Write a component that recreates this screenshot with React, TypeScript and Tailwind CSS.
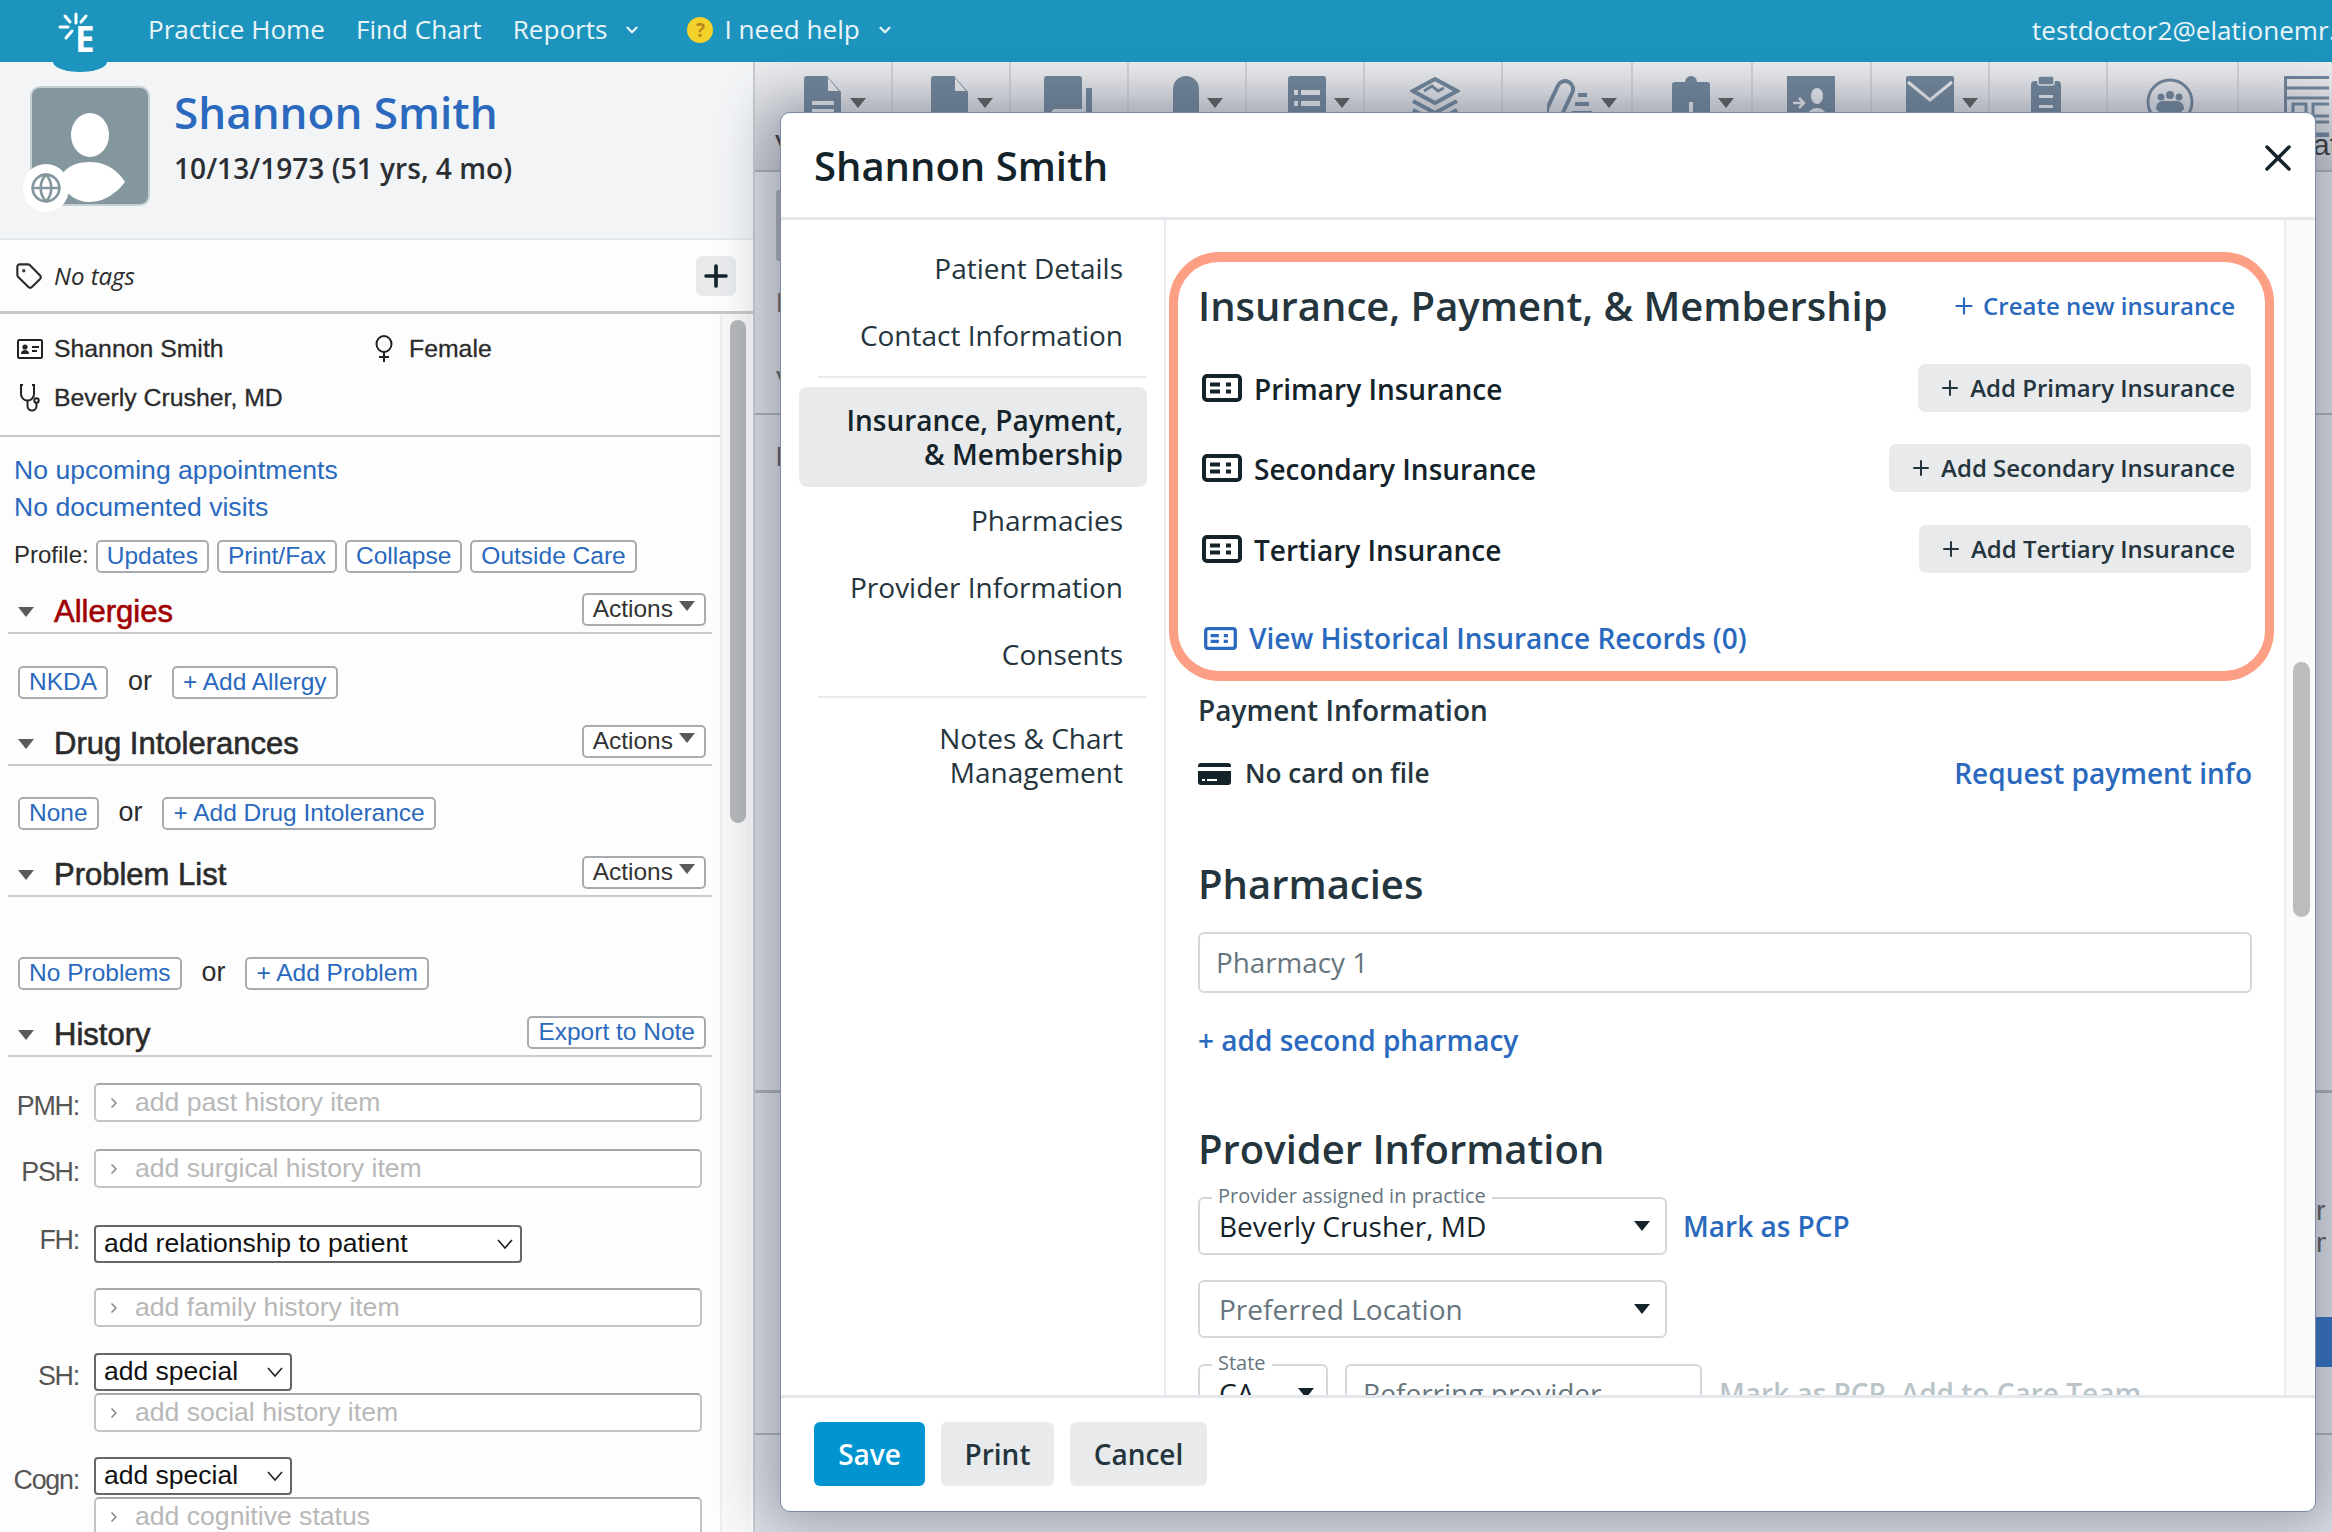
import { ChevronDown, ChevronRight, Globe, Plus, Tag, X } from "lucide-react"
import type { ReactNode } from "react"

const toolbarCells = [
  { w: "w-[138px]", icon: "doc-lines", pl: "pl-[49px]", arrow: true, label: "V", labelClass: "-ml-[29px]" },
  { w: "w-[118px]", icon: "doc", pl: "pl-[38px]", arrow: true },
  { w: "w-[118px]", icon: "chat", pl: "pl-[33px]", arrow: false },
  { w: "w-[118px]", icon: "pill", pl: "pl-[44px]", arrow: true },
  { w: "w-[118px]", icon: "list", pl: "pl-[41px]", arrow: true },
  { w: "w-[138px]", icon: "stack", pl: "pl-[45px]", arrow: false },
  { w: "w-[130px]", icon: "meds", pl: "pl-[44px]", arrow: true },
  { w: "w-[120px]", icon: "chart", pl: "pl-[39px]", arrow: true },
  { w: "w-[119px]", icon: "contact", pl: "pl-[34px]", arrow: false },
  { w: "w-[118px]", icon: "mail", pl: "pl-[34px]", arrow: true },
  { w: "w-[118px]", icon: "clip", pl: "pl-[41px]", arrow: false },
  { w: "w-[131px]", icon: "group", pl: "pl-[38px]", arrow: false },
  { w: "w-[95px]", icon: "layout", pl: "pl-[45px]", arrow: false, label: "at", labelClass: "ml-[29px]" },
]

function ToolIcon({ name }: { name: string }) {
  const fill = "#6f8397"
  if (name === "doc" || name === "doc-lines") {
    return (
      <svg width="38" height="52" viewBox="0 0 38 52">
        <path d="M3 0h20l14 16v36H0V3a3 3 0 0 1 3-3z" fill={fill} />
        <path d="M24 2v13h11z" fill="#e6e7ea" />
        {name === "doc-lines" && <path d="M8 25h22v4H8zM8 33h22v4H8z" fill="#e6e7ea" />}
      </svg>
    )
  }
  if (name === "chat") {
    return (
      <svg width="50" height="52" viewBox="0 0 50 52">
        <path d="M3 0h32a3 3 0 0 1 3 3v30H10l-8 8H0V3a3 3 0 0 1 3-3z" fill={fill} />
        <path d="M42 12h6v40H12V44h26a4 4 0 0 0 4-4z" fill={fill} />
      </svg>
    )
  }
  if (name === "pill") {
    return (
      <svg width="26" height="52" viewBox="0 0 26 52">
        <path d="M0 13a13 13 0 0 1 26 0v39H0z" fill={fill} />
        <rect x="4" y="36" width="18" height="16" fill="#e6e7ea" />
      </svg>
    )
  }
  if (name === "list") {
    return (
      <svg width="38" height="52" viewBox="0 0 38 52">
        <rect width="38" height="52" rx="3" fill={fill} />
        <path d="M6 14h4v5H6zM13 14h19v5H13zM6 25h4v5H6zM13 25h19v5H13zM6 36h4v5H6zM13 36h19v5H13z" fill="#e6e7ea" />
      </svg>
    )
  }
  if (name === "stack") {
    return (
      <svg width="50" height="52" viewBox="0 0 50 52" fill="none" stroke={fill} strokeWidth="4">
        <path d="M25 3l22 12-22 12L3 15z" />
        <path d="M3 25l22 12 22-12M3 34l22 12 22-12" />
        <path d="M14 15l8-5 6 5 6-3" strokeWidth="3" />
      </svg>
    )
  }
  if (name === "meds") {
    return (
      <svg width="46" height="52" viewBox="0 0 46 52" fill="none" stroke={fill}>
        <rect x="5" y="4" width="16" height="40" rx="8" strokeWidth="4" transform="rotate(25 13 24)" />
        <path d="M31 19h9M28 28h14M25 37h20" strokeWidth="4" />
      </svg>
    )
  }
  if (name === "chart") {
    return (
      <svg width="38" height="52" viewBox="0 0 38 52">
        <path d="M3 6h10a6 6 0 0 1 12 0h10a3 3 0 0 1 3 3v43H0V9a3 3 0 0 1 3-3z" fill={fill} />
        <path d="M9 36h4v16H9zM17 26h4v26h-4zM25 40h4v12h-4z" fill="#e6e7ea" />
      </svg>
    )
  }
  if (name === "contact") {
    return (
      <svg width="48" height="52" viewBox="0 0 48 52">
        <rect width="48" height="52" fill={fill} />
        <ellipse cx="30" cy="20" rx="6" ry="8" fill="#e6e7ea" />
        <path d="M20 44c0-8 4-12 10-12s10 4 10 12z" fill="#e6e7ea" />
        <path d="M6 27h10M12 22l5 5-5 5" stroke="#e6e7ea" strokeWidth="2.5" fill="none" />
      </svg>
    )
  }
  if (name === "mail") {
    return (
      <svg width="48" height="52" viewBox="0 0 48 52">
        <rect width="48" height="52" rx="2" fill={fill} />
        <path d="M2 6l22 18L46 6" stroke="#e6e7ea" strokeWidth="3" fill="none" />
      </svg>
    )
  }
  if (name === "clip") {
    return (
      <svg width="30" height="52" viewBox="0 0 30 52">
        <rect y="5" width="30" height="47" rx="4" fill={fill} />
        <rect x="7" y="0" width="16" height="9" rx="2" fill={fill} stroke="#e6e7ea" strokeWidth="1.5" />
        <path d="M8 19h14v3H8zM8 29h14v3H8zM8 39h14v3H8z" fill="#e6e7ea" />
      </svg>
    )
  }
  if (name === "group") {
    return (
      <svg width="48" height="52" viewBox="0 0 48 52">
        <circle cx="24" cy="26" r="22" fill="none" stroke={fill} strokeWidth="3" />
        <circle cx="24" cy="19" r="4" fill={fill} />
        <circle cx="15" cy="21" r="3.5" fill={fill} />
        <circle cx="33" cy="21" r="3.5" fill={fill} />
        <path d="M10 33c0-5 3-8 7-8h14c4 0 7 3 7 8l-6 6H16z" fill={fill} />
      </svg>
    )
  }
  return (
    <svg width="45" height="62" viewBox="0 0 45 62" fill="none" stroke={fill} strokeWidth="3">
      <rect x="1.5" y="1.5" width="60" height="58" />
      <path d="M1 12h45M1 22h45" />
      <rect x="9" y="28" width="13" height="32" />
      <rect x="29" y="28" width="18" height="12" />
      <rect x="29" y="46" width="18" height="12" />
    </svg>
  )
}

function Caret({ className = "" }: { className?: string }) {
  return (
    <svg width="16" height="10" viewBox="0 0 16 10" className={className}>
      <path d="M0 0h16L8 10z" fill="#5a5a5a" />
    </svg>
  )
}

function InsuranceCard({ blue = false }: { blue?: boolean }) {
  const c = blue ? "#2a69bd" : "#14232a"
  return (
    <svg width={blue ? 33 : 40} height={blue ? 23 : 28} viewBox="0 0 40 28">
      <rect x="2" y="2" width="36" height="24" rx="3" fill="none" stroke={c} strokeWidth="4" />
      <path d="M8 8.5h10v4H8zM8 15.5h10v4H8zM24 8.5h5v4h-5zM24 15.5h5v4h-5z" fill={c} />
    </svg>
  )
}

function SmallBtn({ children }: { children: ReactNode }) {
  return (
    <span className="inline-flex h-[33px] items-center rounded-[5px] border-2 border-[#a8acb0] bg-white px-[9px] text-[24.5px] leading-none text-[#2a69bd]">
      {children}
    </span>
  )
}

function Or() {
  return <span className="mx-[20px] -mt-[3px] text-[26.8px] leading-[33px]">or</span>
}

function SectionHead({ title, action, red = false, mt = "mt-[26px]" }: { title: string; action: string; red?: boolean; mt?: string }) {
  return (
    <div className={`ml-[8px] flex h-[41px] w-[704px] items-start justify-between border-b-2 border-[#cccccc] pr-[6px] ${mt}`}>
      <div className="flex items-center">
        <Caret className="ml-[10px]" />
        <span className={`ml-[20px] text-[31px] leading-[38px] [-webkit-text-stroke:0.6px_currentColor] ${red ? "text-[#a00000]" : "text-[#2b2b2b]"}`}>{title}</span>
      </div>
      <span className="flex h-[33px] items-center gap-[6px] rounded-[5px] border-2 border-[#a8acb0] bg-white px-[9px] text-[24.5px] leading-none text-[#333333]">
        {action === "Export to Note" ? <span className="text-[#2a69bd]">{action}</span> : action}
        {action === "Actions" && <Caret className="-mt-[8px]" />}
      </span>
    </div>
  )
}

function HistoryInput({ text }: { text: string }) {
  return (
    <div className="flex h-[39px] w-[608px] items-center rounded-[5px] border-2 border-[#c4c4c4] border-t-[#a8a8a8] bg-white pl-[10px]">
      <ChevronRight className="h-[16px] w-[16px] text-[#888888]" strokeWidth={2.5} />
      <span className="ml-[13px] text-[26.6px] text-[#b8b8b8]">{text}</span>
    </div>
  )
}

function HistorySelect({ text, w }: { text: string; w: string }) {
  return (
    <div className={`flex h-[38px] items-center justify-between rounded-[4px] border-2 border-[#666666] bg-white pr-[7px] pl-[8px] ${w}`}>
      <span className="text-[26.5px] text-[#111111]">{text}</span>
      <svg width="16" height="10" viewBox="0 0 16 10" fill="none" stroke="#222222" strokeWidth="1.6">
        <path d="M1 1l7 8 7-8" />
      </svg>
    </div>
  )
}

function HistoryRow({ label, children, pt, mt }: { label?: string; children: ReactNode; pt?: string; mt: string }) {
  return (
    <div className={`flex ${mt}`}>
      <span className={`w-[81px] pr-[2px] text-right text-[26.8px] leading-[30px] tracking-[-1.2px] text-[#555555] ${pt ?? ""}`}>{label}</span>
      <div className="ml-[13px]">{children}</div>
    </div>
  )
}

function LeftPanel() {
  return (
    <aside className="flex w-[753px] shrink-0 flex-col font-['Liberation_Sans',Arial,sans-serif] text-[#2b2b2b]">
      <header className="flex h-[178px] shrink-0 border-b-2 border-[#e3e8ea] bg-[#f2f4f6] pt-[24px] pl-[30px]">
        <div className="relative h-[120px] w-[120px] rounded-[10px] border-2 border-[#c6cfd3] bg-[#84969e]">
          <svg width="115" height="116" viewBox="0 0 115 116" className="absolute top-0 left-0">
            <ellipse cx="58" cy="47" rx="19" ry="22" fill="#ffffff" />
            <path d="M28 92c4-14 17-18 31-18 16 0 28 10 34 20-7 9-19 20-36 20-12 0-25-8-29-22z" fill="#ffffff" />
          </svg>
          <div className="absolute top-[76px] -left-[9px] flex h-[48px] w-[46px] items-center justify-center rounded-full bg-white">
            <Globe className="h-[32px] w-[32px] text-[#84969e]" strokeWidth={2} />
          </div>
        </div>
        <div className="ml-[24px] font-['Open_Sans',sans-serif]">
          <h1 className="-mt-[2px] text-[44px] leading-[56px] font-semibold text-[#2a69bd]">Shannon Smith</h1>
          <p className="mt-[8px] text-[28.1px] leading-[40px] font-semibold text-[#2b2f33]">10/13/1973 (51 yrs, 4 mo)</p>
        </div>
      </header>

      <div className="flex h-[74px] shrink-0 items-center border-b-[3px] border-[#c8c8c8] bg-[#fdfdfd] pr-[17px] pl-[15px]">
        <Tag className="h-[28px] w-[28px] text-[#2b2b2b]" strokeWidth={1.8} />
        <span className="ml-[11px] font-['Open_Sans',sans-serif] text-[24px] italic text-[#2b2b2b]">No tags</span>
        <button className="ml-auto flex h-[40px] w-[40px] items-center justify-center rounded-[6px] bg-[#e8eaec]">
          <Plus className="h-[34px] w-[34px] text-[#16252c]" strokeWidth={2.6} />
        </button>
      </div>

      <div className="flex min-h-0 flex-1 overflow-hidden">
        <div className="w-[722px] shrink-0 overflow-hidden border-r-2 border-[#eeeeee] bg-[#fdfdfd]">
          <div className="w-full border-b-2 border-[#c8c8c8] pt-[10px] pb-[13px] [-webkit-text-stroke:0.3px_currentColor]">
            <div className="flex h-[49px] items-center text-[24.8px]">
              <svg width="26" height="20" viewBox="0 0 26 20" className="ml-[17px]">
                <rect x="1" y="1" width="24" height="18" rx="1.5" fill="none" stroke="#222222" strokeWidth="2" />
                <circle cx="8" cy="8" r="2.6" fill="#222222" />
                <path d="M4 15c0-3 2-4 4-4s4 1 4 4zM15 7h7v2h-7zM15 11h5v2h-5z" fill="#222222" />
              </svg>
              <span className="ml-[11px] w-[318px]">Shannon Smith</span>
              <svg width="24" height="27" viewBox="0 0 24 27" fill="none" stroke="#222222" strokeWidth="2">
                <ellipse cx="12" cy="9" rx="7.5" ry="8" />
                <path d="M12 17v10M7 22h10" />
              </svg>
              <span className="ml-[13px]">Female</span>
            </div>
            <div className="flex h-[49px] items-center text-[24.8px]">
              <svg width="24" height="28" viewBox="0 0 24 28" fill="none" stroke="#222222" strokeWidth="2" className="ml-[19px]">
                <path d="M4 1H2v9a6.5 6.5 0 0 0 13 0V1h-2" />
                <path d="M8.5 17v5a4.5 4.5 0 0 0 9 0v-3" />
                <circle cx="17.5" cy="16.5" r="2.2" />
              </svg>
              <span className="ml-[11px]">Beverly Crusher, MD</span>
            </div>
          </div>

          <div className="mt-[15px] pl-[14px] text-[26.6px] leading-[37px] text-[#2a69bd]">
            <p>No upcoming appointments</p>
            <p>No documented visits</p>
          </div>

          <div className="mt-[14px] flex items-start pl-[14px]">
            <span className="-mt-[2px] mr-[7px] text-[24px] leading-[33px]">Profile:</span>
            <div className="flex gap-[8px]">
              <SmallBtn>Updates</SmallBtn>
              <SmallBtn>Print/Fax</SmallBtn>
              <SmallBtn>Collapse</SmallBtn>
              <SmallBtn>Outside Care</SmallBtn>
            </div>
          </div>

          <SectionHead title="Allergies" action="Actions" red mt="mt-[20px]" />
          <div className="mt-[32px] flex items-center pl-[18px]">
            <SmallBtn>NKDA</SmallBtn>
            <Or />
            <SmallBtn>+ Add Allergy</SmallBtn>
          </div>

          <SectionHead title="Drug Intolerances" action="Actions" />
          <div className="mt-[31px] flex items-center pl-[18px]">
            <SmallBtn>None</SmallBtn>
            <Or />
            <SmallBtn>+ Add Drug Intolerance</SmallBtn>
          </div>

          <SectionHead title="Problem List" action="Actions" />
          <div className="mt-[60px] flex items-center pl-[18px]">
            <SmallBtn>No Problems</SmallBtn>
            <Or />
            <SmallBtn>+ Add Problem</SmallBtn>
          </div>

          <SectionHead title="History" action="Export to Note" />

          <HistoryRow label="PMH:" pt="pt-[8px]" mt="mt-[26px]">
            <HistoryInput text="add past history item" />
          </HistoryRow>
          <HistoryRow label="PSH:" pt="pt-[8px]" mt="mt-[27px]">
            <HistoryInput text="add surgical history item" />
          </HistoryRow>
          <HistoryRow label="FH:" mt="mt-[37px]">
            <HistorySelect text="add relationship to patient" w="w-[428px]" />
          </HistoryRow>
          <HistoryRow mt="mt-[25px]">
            <HistoryInput text="add family history item" />
          </HistoryRow>
          <HistoryRow label="SH:" pt="pt-[8px]" mt="mt-[26px]">
            <HistorySelect text="add special" w="w-[198px]" />
            <div className="mt-[2px]">
              <HistoryInput text="add social history item" />
            </div>
          </HistoryRow>
          <HistoryRow label="Cogn:" pt="pt-[8px]" mt="mt-[25px]">
            <HistorySelect text="add special" w="w-[198px]" />
            <div className="mt-[2px]">
              <HistoryInput text="add cognitive status" />
            </div>
          </HistoryRow>
        </div>
        <div className="w-[29px] shrink-0 bg-[#f8f8f8] pt-[6px] pl-[8px]">
          <div className="h-[503px] w-[16px] rounded-full bg-[#b4b6b8]" />
        </div>
      </div>
    </aside>
  )
}

function ChartBackground() {
  return (
    <main className="flex min-w-0 flex-1 flex-col overflow-hidden border-l-2 border-[#c8cbd0] bg-[#dcdee3] font-['Liberation_Sans',Arial,sans-serif] text-[#555555]">
      <div className="flex h-[110px] shrink-0 border-b-2 border-[#a9adb3] bg-gradient-to-b from-[#ebebed] to-[#c9cbd1]">
        {toolbarCells.map((cell) => (
          <div key={cell.icon} className={`shrink-0 overflow-hidden border-r-2 border-[#cfd0d4] pt-[14px] ${cell.w} ${cell.pl}`}>
            <div className="flex h-[52px]">
              <ToolIcon name={cell.icon} />
              {cell.arrow && <Caret className="mt-[22px] ml-[8px]" />}
            </div>
            {cell.label && <div className={`text-[30px] leading-[34px] text-[#333333] ${cell.labelClass}`}>{cell.label}</div>}
          </div>
        ))}
      </div>
      <div className="h-[243px] shrink-0 border-b-2 border-[#a9adb3] pl-[21px]">
        <div className="mt-[18px] h-[71px] w-[8px] rounded-[3px] bg-[#a9adb5]" />
        <p className="mt-[27px] text-[28px] leading-[30px]">F</p>
        <p className="mt-[48px] text-[28px] leading-[30px]">V</p>
      </div>
      <div className="h-[678px] shrink-0 border-b-[3px] border-[#a9adb3] pl-[21px]">
        <p className="mt-[27px] text-[28px] leading-[30px] font-bold">N</p>
      </div>
      <div className="flex h-[274px] shrink-0 flex-col items-end pr-[6px] text-[28px] leading-[32px]">
        <p className="mt-[102px] w-[10px]">r</p>
        <p className="w-[10px] overflow-hidden">m</p>
        <div className="mt-[58px] -mr-[6px] h-[50px] w-[16px] shrink-0 bg-[#2a69bd]" />
      </div>
      <div className="h-[68px] shrink-0 border-b-2 border-[#a9adb3]" />
    </main>
  )
}

function NavItem({ children, active = false }: { children: ReactNode; active?: boolean }) {
  return <div className={`pr-[24px] text-right text-[28px] leading-[34px] ${active ? "font-semibold text-[#14232a]" : "text-[#25353d]"}`}>{children}</div>
}

function AddButton({ children }: { children: string }) {
  return (
    <button className="flex h-[48px] items-center gap-[8px] rounded-[7px] bg-[#e8eaec] pr-[16px] pl-[20px] text-[24px] font-semibold text-[#25353d]">
      <Plus className="h-[24px] w-[24px]" strokeWidth={2} />
      {children}
    </button>
  )
}

function InsuranceRow({ label, action, mt }: { label: string; action: string; mt: string }) {
  return (
    <div className={`flex items-center justify-between ${mt}`}>
      <div className="flex items-center pl-[4px]">
        <InsuranceCard />
        <span className="mt-[2px] ml-[12px] text-[28px] leading-[40px] font-semibold text-[#14232a]">{label}</span>
      </div>
      <AddButton>{action}</AddButton>
    </div>
  )
}

function SelectField({ legend, value, placeholder = false }: { legend?: string; value: string; placeholder?: boolean }) {
  return (
    <div className="relative flex h-[58px] w-[469px] items-center justify-between rounded-[6px] border-2 border-[#d3d8dc] pr-[15px] pl-[19px]">
      {legend && <span className="absolute -top-[15px] left-[12px] bg-white px-[6px] text-[20px] leading-[24px] text-[#66757d]">{legend}</span>}
      <span className={`text-[28px] leading-[40px] ${placeholder ? "text-[#66757d]" : "text-[#14232a]"}`}>{value}</span>
      <svg width="16" height="10" viewBox="0 0 16 10">
        <path d="M0 0h16L8 10z" fill="#14232a" />
      </svg>
    </div>
  )
}

function PatientModal() {
  return (
    <section className="absolute top-[112px] left-[780px] flex h-[1400px] w-[1536px] flex-col overflow-hidden rounded-[10px] border border-[#7c8aa0] bg-white font-['Open_Sans',sans-serif] shadow-[0_0_50px_12px_rgba(70,80,105,0.42)]">
      <div className="flex h-[107px] shrink-0 items-center justify-between border-b-[3px] border-[#e4e8ec] pr-[15px] pl-[33px]">
        <h2 className="mt-[1px] text-[40px] font-semibold text-[#14232a]">Shannon Smith</h2>
        <X className="-mt-[14px] h-[44px] w-[44px] text-[#14232a]" strokeWidth={1.9} />
      </div>

      <div className="flex min-h-0 flex-1">
        <nav className="w-[385px] shrink-0 border-r-2 border-[#e8ecef] pt-[31px] pr-[17px] pl-[18px]">
          <div className="flex h-[34px] items-center justify-end"><NavItem>Patient Details</NavItem></div>
          <div className="mt-[33px] flex h-[34px] items-center justify-end"><NavItem>Contact Information</NavItem></div>
          <div className="mt-[24px] ml-[19px] border-t-2 border-[#e8eaec]" />
          <div className="mt-[9px] rounded-[8px] bg-[#e8eaec] py-[16px]">
            <NavItem active>Insurance, Payment,</NavItem>
            <NavItem active>& Membership</NavItem>
          </div>
          <div className="mt-[16px]"><NavItem>Pharmacies</NavItem></div>
          <div className="mt-[33px]"><NavItem>Provider Information</NavItem></div>
          <div className="mt-[33px]"><NavItem>Consents</NavItem></div>
          <div className="mt-[25px] ml-[19px] border-t-2 border-[#e8eaec]" />
          <div className="mt-[23px]">
            <NavItem>Notes & Chart</NavItem>
            <NavItem>Management</NavItem>
          </div>
        </nav>

        <div className="min-w-0 flex-1 overflow-hidden">
          <div className="mt-[32px] mr-[10px] ml-[3px] h-[429px] rounded-[50px] border-x-[9px] border-y-[10px] border-[#fd9f84] pt-[16px] pr-[14px] pl-[20px]">
            <div className="flex h-[56px] items-center justify-between">
              <h3 className="text-[40px] font-semibold text-[#25353d]">Insurance, Payment, & Membership</h3>
              <span className="flex items-center gap-[6px] pr-[16px] text-[24px] font-semibold text-[#2a69bd]">
                <Plus className="h-[26px] w-[26px]" strokeWidth={2} />
                Create new insurance
              </span>
            </div>
            <InsuranceRow label="Primary Insurance" action="Add Primary Insurance" mt="mt-[30px]" />
            <InsuranceRow label="Secondary Insurance" action="Add Secondary Insurance" mt="mt-[32px]" />
            <InsuranceRow label="Tertiary Insurance" action="Add Tertiary Insurance" mt="mt-[33px]" />
            <div className="mt-[45px] flex h-[40px] items-center pl-[6px]">
              <InsuranceCard blue />
              <span className="ml-[12px] text-[28px] font-semibold text-[#2a69bd]">View Historical Insurance Records (0)</span>
            </div>
          </div>

          <div className="mr-[32px] ml-[32px]">
            <p className="mt-[9px] text-[28px] leading-[40px] font-semibold text-[#25353d]">Payment Information</p>
            <div className="mt-[24px] flex h-[40px] items-center">
              <svg width="33" height="22" viewBox="0 0 33 22">
                <path d="M3 0h27a3 3 0 0 1 3 3v1H0V3a3 3 0 0 1 3-3zM0 8h33v11a3 3 0 0 1-3 3H3a3 3 0 0 1-3-3z" fill="#14232a" />
                <path d="M4 16h3v2H4zM9 16h10v2H9z" fill="#ffffff" />
              </svg>
              <span className="ml-[14px] text-[26.2px] font-semibold text-[#25353d]">No card on file</span>
              <span className="ml-auto -mt-[2px] text-[28px] font-semibold text-[#2a69bd]">Request payment info</span>
            </div>

            <h3 className="mt-[62px] text-[40px] leading-[56px] font-semibold text-[#25353d]">Pharmacies</h3>
            <div className="mt-[20px] flex h-[61px] items-center rounded-[6px] border-2 border-[#d3d8dc] pl-[16px] text-[27.8px] text-[#66757d]">Pharmacy 1</div>
            <p className="mt-[27px] text-[28px] leading-[40px] font-semibold text-[#2a69bd]">+ add second pharmacy</p>

            <h3 className="mt-[61px] text-[40px] leading-[56px] font-semibold text-[#25353d]">Provider Information</h3>
            <div className="mt-[20px] flex items-center">
              <SelectField legend="Provider assigned in practice" value="Beverly Crusher, MD" />
              <span className="ml-[16px] text-[28px] font-semibold text-[#2a69bd]">Mark as PCP</span>
            </div>
            <div className="mt-[25px]">
              <SelectField value="Preferred Location" placeholder />
            </div>
            <div className="mt-[26px] flex items-start">
              <div className="relative flex h-[58px] w-[130px] items-center justify-between rounded-[6px] border-2 border-[#d3d8dc] pr-[12px] pl-[19px]">
                <span className="absolute -top-[15px] left-[12px] bg-white px-[6px] text-[20px] leading-[24px] text-[#66757d]">State</span>
                <span className="text-[28px] text-[#14232a]">CA</span>
                <svg width="16" height="10" viewBox="0 0 16 10">
                  <path d="M0 0h16L8 10z" fill="#14232a" />
                </svg>
              </div>
              <div className="ml-[17px] flex h-[58px] w-[357px] items-center rounded-[6px] border-2 border-[#d3d8dc] pl-[16px] text-[28px] text-[#66757d]">Referring provider</div>
              <span className="mt-[8px] ml-[17px] text-[28px] font-semibold text-[#b9c4c9]">Mark as PCP, Add to Care Team</span>
            </div>
          </div>
        </div>

        <div className="w-[31px] shrink-0 border-l-2 border-[#eeeeee] bg-[#fafafa] pt-[442px] pl-[7px]">
          <div className="h-[255px] w-[17px] rounded-full bg-[#bcbcbc]" />
        </div>
      </div>

      <div className="flex h-[116px] shrink-0 items-start gap-[16px] border-t-[3px] border-[#e4e8ec] pt-[24px] pl-[33px] text-[28px] font-semibold">
        <button className="h-[64px] w-[111px] rounded-[6px] bg-[#0095d0] text-white">Save</button>
        <button className="h-[64px] w-[113px] rounded-[6px] bg-[#e8eaec] text-[#25353d]">Print</button>
        <button className="h-[64px] w-[137px] rounded-[6px] bg-[#e8eaec] text-[#25353d]">Cancel</button>
      </div>
    </section>
  )
}

export default function App() {
  return (
    <div className="relative flex h-[1532px] w-[2332px] flex-col overflow-hidden bg-white">
      <div className="relative flex h-[62px] shrink-0 items-center bg-[#1c94bd] pb-[2px] font-['Open_Sans',sans-serif] text-[26.1px] text-[#eaf5f9]">
        <div className="absolute top-[62px] left-[53px] h-[10px] w-[54px] rounded-b-[27px_10px] bg-[#1c94bd]" />
        <svg width="52" height="50" viewBox="0 0 52 50" className="ml-[58px] shrink-0">
          <g stroke="#ffffff" strokeWidth="3" strokeLinecap="round">
            <path d="M18 9v9M7 11l5 6M28 11l-5 6M2 22h8M14 26l-6 7" />
          </g>
          <text x="17" y="47" fontFamily="Open Sans, sans-serif" fontWeight="700" fontSize="35" fill="#ffffff">E</text>
        </svg>
        <span className="ml-[38px]">Practice Home</span>
        <span className="ml-[31px]">Find Chart</span>
        <span className="ml-[31px]">Reports</span>
        <ChevronDown className="ml-[16px] h-[18px] w-[18px]" strokeWidth={3} />
        <span className="ml-[46px] flex h-[26px] w-[26px] items-center justify-center rounded-full bg-[#f3d22b] text-[19px] font-bold text-[#b8861a]">?</span>
        <span className="ml-[11px]">I need help</span>
        <ChevronDown className="ml-[16px] h-[18px] w-[18px]" strokeWidth={3} />
        <span className="absolute top-[12px] left-[2032px] whitespace-nowrap leading-[36px]">testdoctor2@elationemr.com</span>
      </div>

      <div className="flex min-h-0 flex-1">
        <LeftPanel />
        <ChartBackground />
      </div>

      <PatientModal />
    </div>
  )
}
